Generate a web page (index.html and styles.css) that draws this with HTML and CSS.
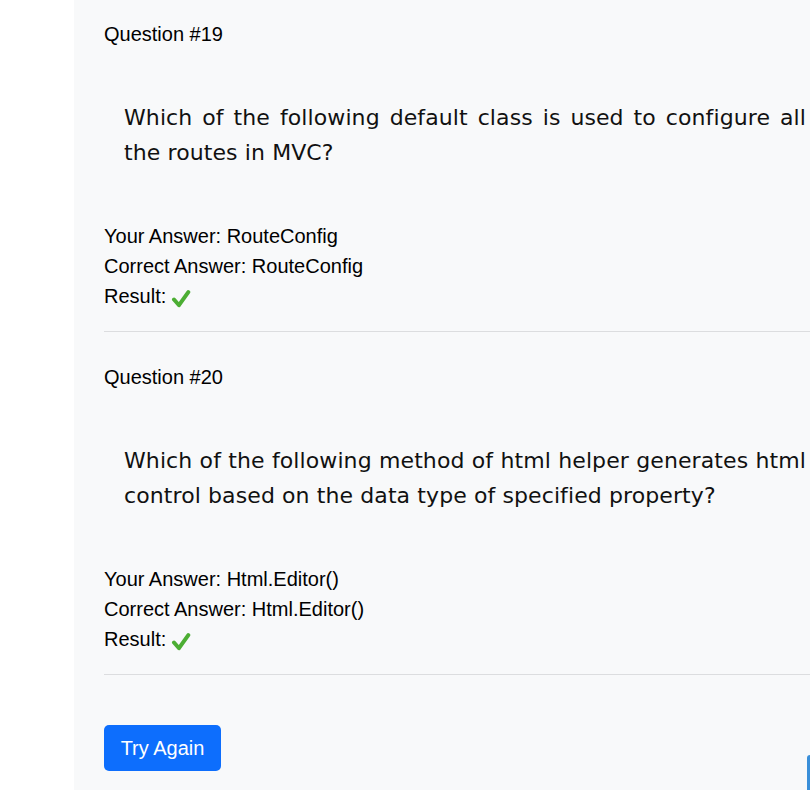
FILE: index.html
```html
<!DOCTYPE html>
<html lang="en">
<head>
<meta charset="utf-8">
<title>Quiz Results</title>
<link rel="stylesheet" href="styles.css">
</head>
<body>
<div class="layout">
  <aside class="side"></aside>
  <main class="panel">
    <section class="q">
      <div class="label">Question #19</div>
      <p class="text">Which of the following default class is used to configure all the routes in MVC?</p>
      <div class="ans">Your Answer: RouteConfig</div>
      <div class="ans">Correct Answer: RouteConfig</div>
      <div class="ans">Result: <svg class="check" viewBox="0 0 20 20" width="20" height="20"><path d="M3 10.5 L8 16.2 L17.3 3.2" fill="none" stroke="#4cae33" stroke-width="4" stroke-linecap="round" stroke-linejoin="round"/></svg></div>
      <hr class="rule">
    </section>
    <section class="q">
      <div class="label">Question #20</div>
      <p class="text">Which of the following method of html helper generates html control based on the data type of specified property?</p>
      <div class="ans">Your Answer: Html.Editor()</div>
      <div class="ans">Correct Answer: Html.Editor()</div>
      <div class="ans">Result: <svg class="check" viewBox="0 0 20 20" width="20" height="20"><path d="M3 10.5 L8 16.2 L17.3 3.2" fill="none" stroke="#4cae33" stroke-width="4" stroke-linecap="round" stroke-linejoin="round"/></svg></div>
      <hr class="rule">
    </section>
    <button class="btn">Try Again</button>
  </main>
</div>
<div class="fab"></div>
</body>
</html>
```
FILE: styles.css
```css
html, body {
  margin: 0;
  padding: 0;
  overflow: hidden;
  background: #ffffff;
}
body {
  font-family: "Liberation Sans", Arial, sans-serif;
  font-size: 20px;
  line-height: 30px;
  color: #000;
  width: 810px;
  height: 790px;
  position: relative;
}
.layout {
  display: flex;
  width: 900px;
}
.side {
  width: 74px;
  flex: none;
  background: #fff;
}
.panel {
  flex: none;
  width: 722px;
  background: #f8f9fa;
  padding: 19px 30px 60px 30px;
  min-height: 790px;
}
.label {
  height: 30px;
}
.text {
  font-family: "DejaVu Sans", Verdana, sans-serif;
  font-size: 22px;
  line-height: 35px;
  text-align: justify;
  letter-spacing: 0.1px;
  margin: 50.5px 0 51.5px 0;
  padding: 0 20px;
  color: #111;
}
.ans {
  height: 30px;
  display: flex;
  align-items: center;
  white-space: pre;
}
.check {
  margin-left: -1px;
  margin-top: 6px;
}
.rule {
  border: 0;
  border-top: 1px solid #dcdddf;
  margin: 20px 0 30px 0;
}
.q:last-of-type .rule {
  margin-bottom: 50px;
}
.btn {
  font-family: "Liberation Sans", Arial, sans-serif;
  font-size: 20px;
  line-height: 30px;
  color: #fff;
  background: #0d6efd;
  border: 0;
  border-radius: 5px;
  padding: 8px 16px;
  width: 117px;
  height: 46px;
}
.fab {
  position: absolute;
  left: 807px;
  top: 755px;
  width: 40px;
  height: 60px;
  background: #3a8fd9;
  border-top-left-radius: 3px;
}
```
